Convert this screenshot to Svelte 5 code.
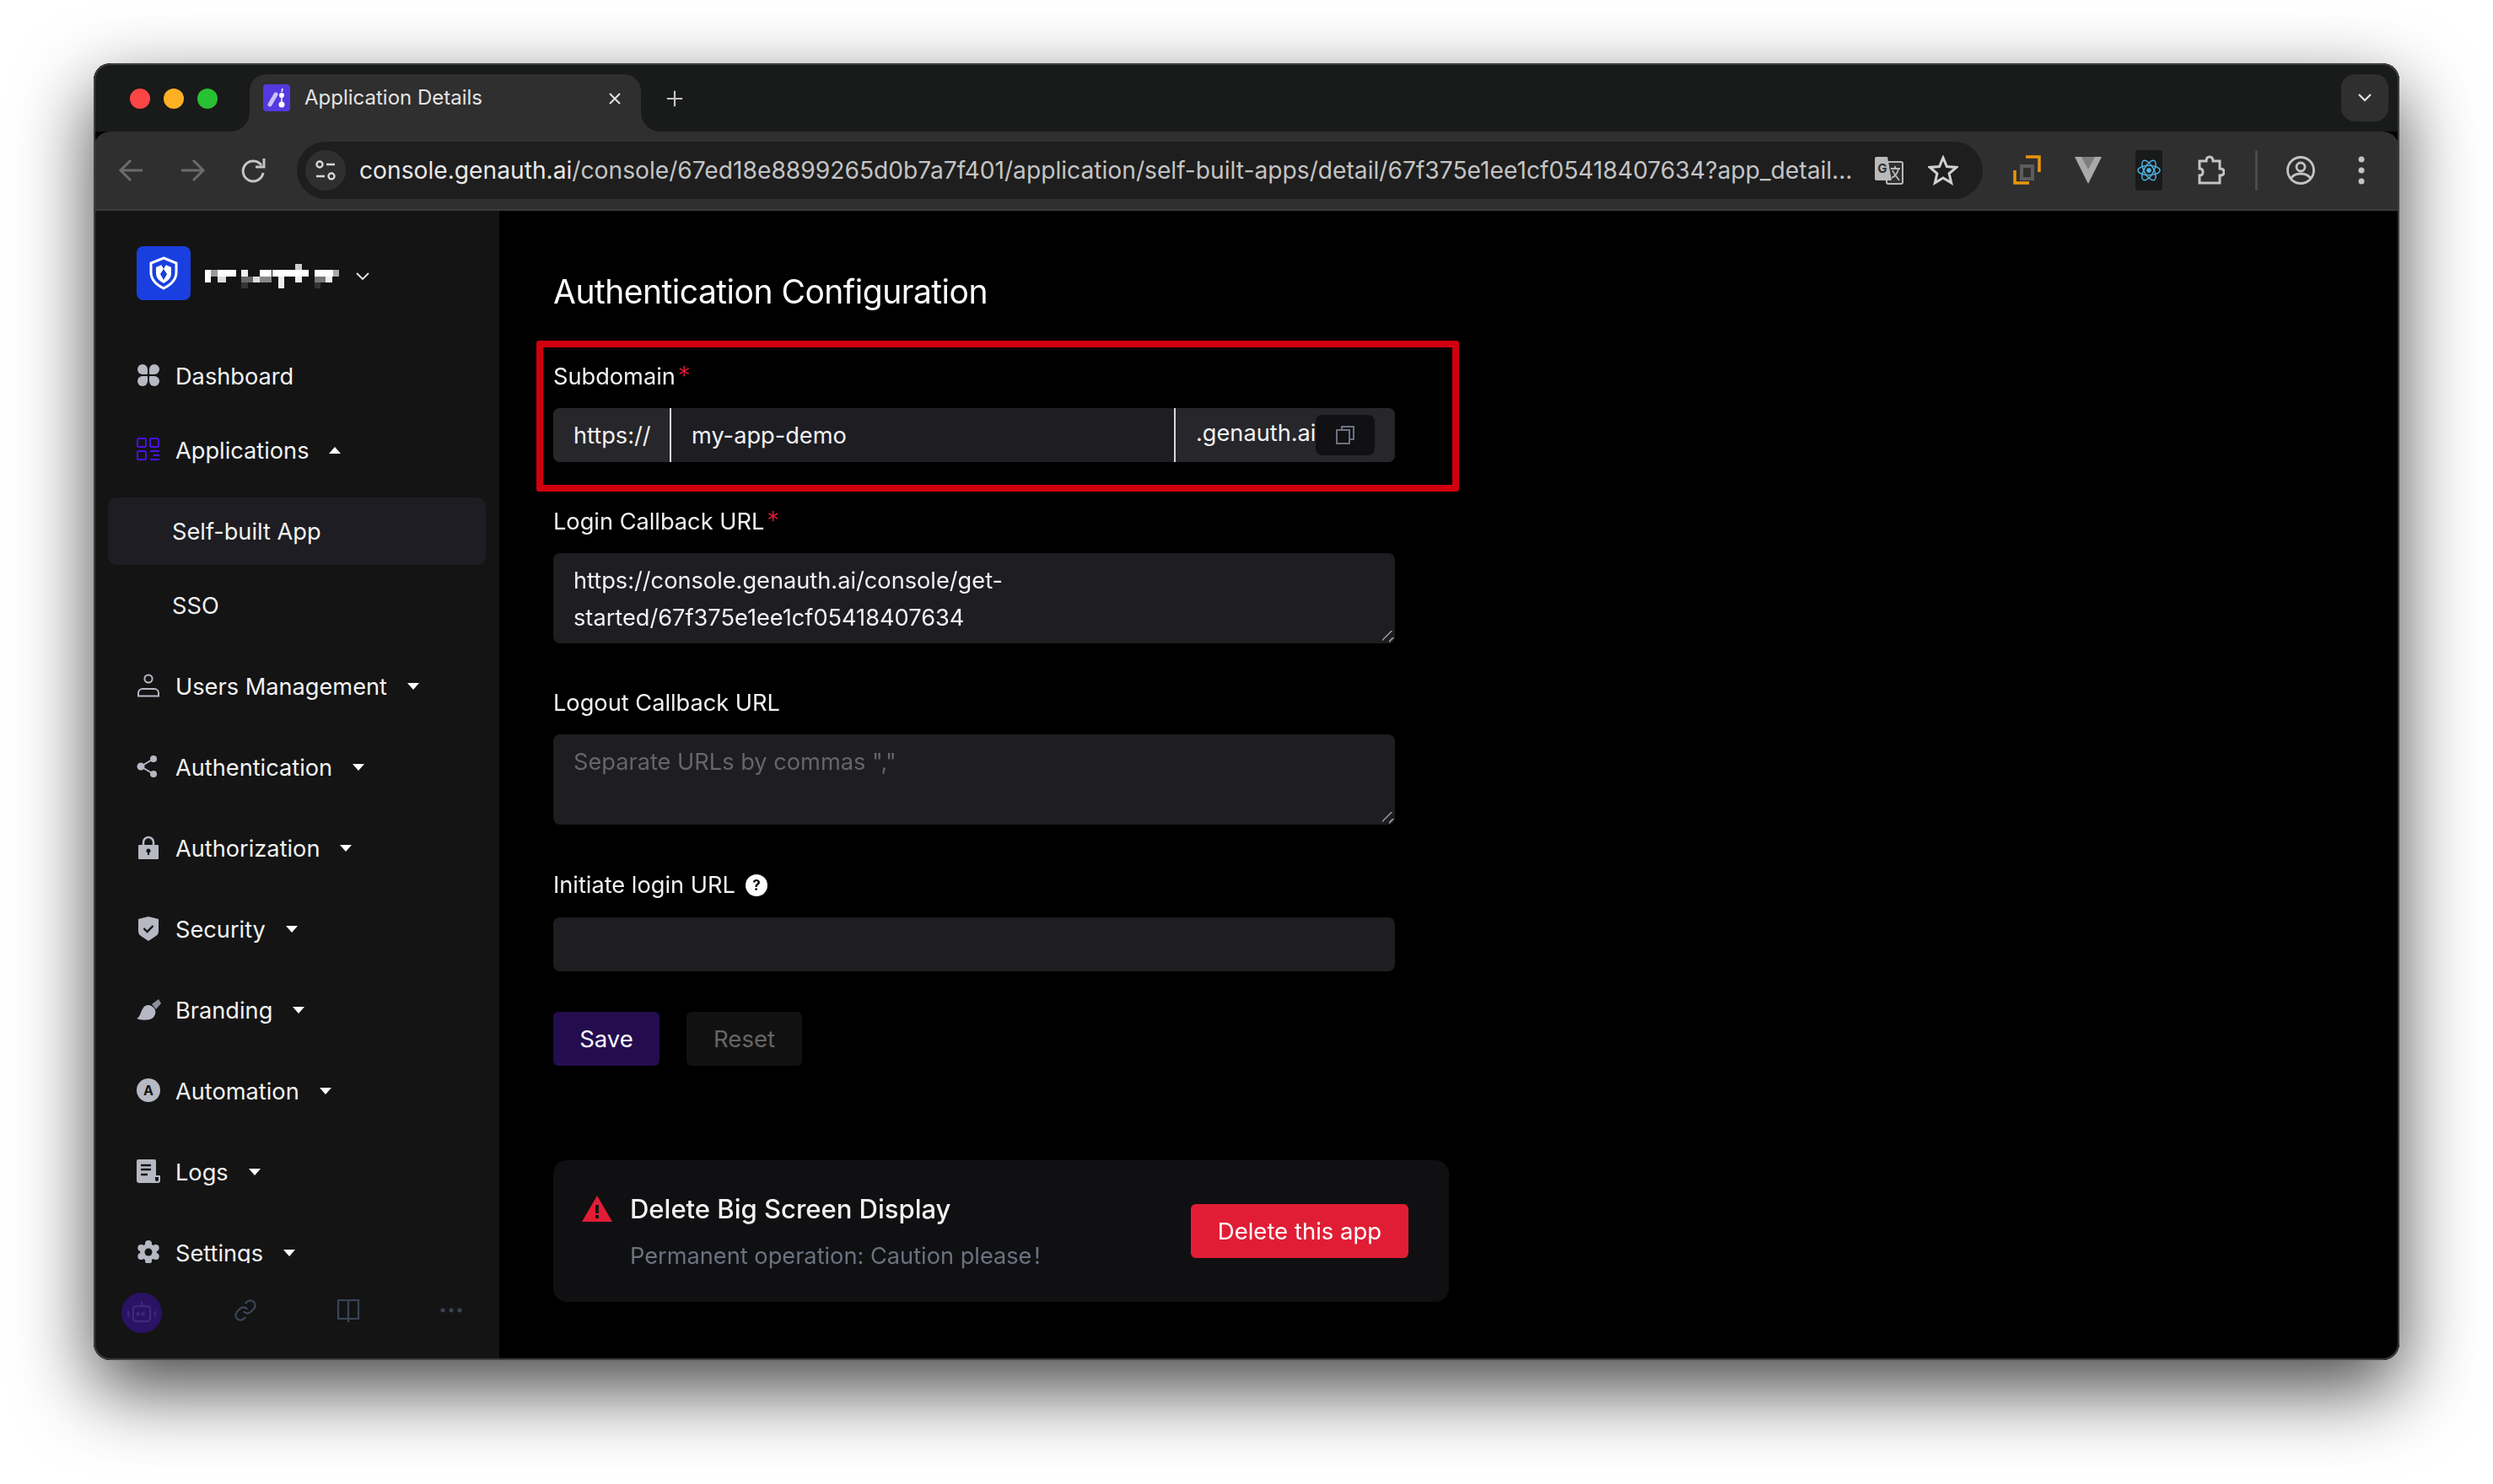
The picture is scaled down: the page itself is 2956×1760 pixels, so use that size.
<script>
  // sidebar menu; `caret` is the arrow direction, `gap` the space under the row
  const menu = [
    { icon: 'dashboard', label: 'Dashboard', gap: 8 },
    { icon: 'apps', label: 'Applications', caret: 'up' },
    { label: 'Self-built App', sub: true, active: true, gap: 8 },
    { label: 'SSO', sub: true },
    { icon: 'user', label: 'Users Management', caret: 'down' },
    { icon: 'share', label: 'Authentication', caret: 'down' },
    { icon: 'lock', label: 'Authorization', caret: 'down' },
    { icon: 'shield', label: 'Security', caret: 'down' },
    { icon: 'brush', label: 'Branding', caret: 'down' },
    { icon: 'auto', label: 'Automation', caret: 'down' },
    { icon: 'logs', label: 'Logs', caret: 'down' },
    { icon: 'gear', label: 'Settings', caret: 'down' }
  ];

  // mosaic that hides the tenant name
  const mosaic = [
    [692, 162, 24, 22, '#ccc'],
    [370, 184, 22, 44, '#fff'], [392, 184, 24, 22, '#999'], [416, 184, 64, 22, '#fff'], [416, 206, 28, 22, '#ddd'],
    [500, 184, 24, 22, '#eee'], [500, 206, 40, 22, '#666'], [540, 206, 26, 22, '#ddd'], [566, 184, 42, 22, '#fff'],
    [566, 206, 42, 22, '#888'], [500, 228, 22, 22, '#333'], [610, 184, 128, 22, '#fff'], [632, 206, 20, 44, '#eee'],
    [692, 206, 24, 22, '#eee'], [760, 184, 66, 22, '#fff'], [826, 184, 20, 22, '#aaa'], [760, 206, 40, 22, '#777'],
    [800, 206, 22, 22, '#eee'], [760, 228, 20, 22, '#333']
  ];

  const url = 'console.genauth.ai';
  const urlRest = '/console/67ed18e8899265d0b7a7f401/application/self-built-apps/detail/67f375e1ee1cf05418407634?app_detail...';
</script>

{#snippet navIcon(name)}
  <svg class="nav-icon" viewBox="0 0 28 28">
    {#if name === 'dashboard'}
      <g fill="#b6b8c3">
        <rect x="1" y="1" width="12" height="12" rx="6" /><rect x="7" y="7" width="6" height="6" rx="1" />
        <rect x="15" y="1" width="12" height="12" rx="6" /><rect x="15" y="7" width="6" height="6" rx="1" />
        <rect x="1" y="15" width="12" height="12" rx="6" /><rect x="7" y="15" width="6" height="6" rx="1" />
        <rect x="15" y="15" width="12" height="12" rx="6" /><rect x="15" y="15" width="6" height="6" rx="1" />
      </g>
    {:else if name === 'apps'}
      <g fill="none" stroke="#4a12e8" stroke-width="2">
        <rect x="1" y="1" width="10" height="10" rx="1.5" /><rect x="16" y="1" width="10" height="10" rx="1.5" />
        <rect x="1" y="16" width="10" height="10" rx="1.5" />
        <path d="M16 16h11M20 21h7M16 26h11" />
      </g>
    {:else if name === 'user'}
      <g fill="none" stroke="#b6b8c3" stroke-width="2">
        <circle cx="14" cy="6" r="4.600" />
        <path d="M2 26.500v-3.500a5 5 0 0 1 5-5h14a5 5 0 0 1 5 5v3.500z" />
      </g>
    {:else if name === 'share'}
      <g fill="#b6b8c3">
        <circle cx="20" cy="5" r="4" /><circle cx="5" cy="14" r="4.500" /><circle cx="20" cy="23" r="4" />
        <path d="M20 5L5 14l15 9" fill="none" stroke="#b6b8c3" stroke-width="2" />
      </g>
    {:else if name === 'lock'}
      <path d="M8 12V8a6 6 0 0 1 12 0v4" fill="none" stroke="#b6b8c3" stroke-width="2.500" />
      <rect x="2" y="11" width="24" height="17" rx="1" fill="#b6b8c3" />
      <circle cx="14" cy="18" r="2.500" fill="#141414" /><rect x="13" y="18" width="2" height="5" fill="#141414" />
    {:else if name === 'shield'}
      <path d="M14 0l12 3v15q0 3-3 5l-9 6-9-6q-3-2-3-5V3z" fill="#b6b8c3" />
      <path d="M8.500 14l4 4 7-7" fill="none" stroke="#141414" stroke-width="2.400" />
    {:else if name === 'brush'}
      <path d="M0 25C4 24 5 16 8 12C11 8 17 8 21 13C24 17 22 24 16 26C10 27 5 27 0 25z" fill="#b6b8c3" />
      <path d="M18 8L26 2L29 7L23 14z" fill="#8d8f9a" />
    {:else if name === 'auto'}
      <circle cx="14" cy="14" r="14" fill="#b6b8c3" />
      <text x="14" y="20" text-anchor="middle" class="glyph" font-size="16" fill="#141414">A</text>
    {:else if name === 'logs'}
      <path d="M3 0h18a2 2 0 0 1 2 2v17h5v6a3 3 0 0 1-3 3H3a3 3 0 0 1-3-3V2a2 2 0 0 1 2-2z" fill="#b6b8c3" />
      <path d="M5 7h12M5 12h12M5 18h8" stroke="#141414" stroke-width="2.400" />
      <path d="M22 21v3a2 2 0 0 0 4 0v-3z" fill="#141414" />
    {:else if name === 'gear'}
      <g fill="#b6b8c3">
        <circle cx="14" cy="14" r="10" />
        <circle cx="14" cy="4" r="4" /><circle cx="14" cy="24" r="4" />
        <circle cx="5.300" cy="9" r="4" /><circle cx="22.700" cy="9" r="4" />
        <circle cx="5.300" cy="19" r="4" /><circle cx="22.700" cy="19" r="4" />
      </g>
      <circle cx="14" cy="14" r="4.500" fill="#141414" />
    {/if}
  </svg>
{/snippet}

<div class="window">
  <div class="tabstrip">
    <div class="lights">
      <span class="light red"></span><span class="light amber"></span><span class="light green"></span>
    </div>
    <div class="tab">
      <svg class="favicon" viewBox="0 0 32 32">
        <rect width="32" height="32" rx="4" fill="#5538e0" />
        <path d="M8 24L15 12" stroke="#c9c2f2" stroke-width="5" stroke-linecap="round" />
        <circle cx="22" cy="13" r="3" fill="#fff" /><circle cx="22" cy="24" r="3.500" fill="#fff" />
        <path d="M22 15v6M22 9l1-4" stroke="#fff" stroke-width="1.500" />
      </svg>
      <span class="tab-title">Application Details</span>
      <svg class="tab-close" viewBox="0 0 16 16"><path d="M2 2l12 12M14 2L2 14" stroke="#e3e3e3" stroke-width="2" /></svg>
    </div>
    <svg class="new-tab" viewBox="0 0 24 24"><path d="M12 2v20M2 12h20" stroke="#c4c4c4" stroke-width="2.400" /></svg>
    <div class="tab-menu">
      <svg viewBox="0 0 16 10" width="16" height="10"><path d="M1 1l7 7 7-7" fill="none" stroke="#e3e3e3" stroke-width="2.200" /></svg>
    </div>
  </div>

  <div class="toolbar">
    <svg class="tool" viewBox="0 0 36 36"><path d="M31 18H6M17 6L5 18l12 12" fill="none" stroke="#6b6b6b" stroke-width="3" /></svg>
    <svg class="tool" viewBox="0 0 36 36"><path d="M5 18h25M19 6l12 12-12 12" fill="none" stroke="#6b6b6b" stroke-width="3" /></svg>
    <svg class="tool" viewBox="0 0 36 36">
      <path d="M28 12a12 12 0 1 0 2 9" fill="none" stroke="#c4c4c4" stroke-width="3" />
      <path d="M31 4v10H21" fill="none" stroke="#c4c4c4" stroke-width="3" />
    </svg>

    <div class="omnibox">
      <div class="site-info">
        <svg viewBox="0 0 26 26" width="26" height="26">
          <circle cx="6" cy="6" r="3.500" fill="none" stroke="#d8d8d8" stroke-width="2.400" />
          <path d="M14 6h10M2 20h10" stroke="#d8d8d8" stroke-width="2.400" />
          <circle cx="20" cy="20" r="3.500" fill="none" stroke="#d8d8d8" stroke-width="2.400" />
        </svg>
      </div>
      <div class="url"><span class="host">{url}</span>{urlRest}</div>
      <svg class="omni-icon" viewBox="0 0 36 36">
        <rect x="15" y="8" width="19" height="26" rx="2" fill="#2f2f2f" stroke="#b9b9b9" stroke-width="2" />
        <path d="M3 2h13l5 28H3a2 2 0 0 1-2-2V4a2 2 0 0 1 2-2z" fill="#b9b9b9" />
        <text x="10" y="21" text-anchor="middle" class="glyph" font-size="15" fill="#2f2f2f">G</text>
        <path d="M20 16h11M25 13v3M29 16c-1 6-4 9-8 11M22 18c1 3 5 8 8 12" fill="none" stroke="#b9b9b9" stroke-width="1.800" />
      </svg>
      <svg class="omni-icon star" viewBox="0 0 36 36">
        <path d="M18 3l4.400 10.500 11.300.9-8.600 7.400 2.600 11.100L18 27l-9.700 5.900 2.600-11.100-8.600-7.400 11.300-.9z" fill="none" stroke="#d0d0d0" stroke-width="3" />
      </svg>
    </div>

    <svg class="tool ext-first" viewBox="0 0 36 36">
      <path d="M16 4h16v18" fill="none" stroke="#e8960c" stroke-width="3.500" transform="translate(0 -2)" />
      <path d="M3 18v15h17" fill="none" stroke="#e8960c" stroke-width="3.500" />
      <rect x="9" y="11" width="17" height="19" fill="#5c5c5c" /><rect x="13" y="15" width="9" height="11" fill="#2f2f2f" />
    </svg>
    <svg class="tool" viewBox="0 0 36 36">
      <path d="M2 2h32L18 34z" fill="#a9a9a9" /><path d="M10 2h16l-8 15z" fill="#7e7e7e" />
    </svg>
    <div class="react-ext">
      <svg viewBox="0 0 32 32" width="30" height="30">
        <g fill="none" stroke="#4fb8e8" stroke-width="1.500">
          <ellipse cx="16" cy="16" rx="14" ry="6" /><ellipse cx="16" cy="16" rx="14" ry="6" transform="rotate(60 16 16)" />
          <ellipse cx="16" cy="16" rx="14" ry="6" transform="rotate(120 16 16)" />
        </g>
        <circle cx="16" cy="16" r="3" fill="#4fb8e8" />
      </svg>
    </div>
    <svg class="tool" viewBox="0 0 36 36">
      <path d="M6 7h8q0-5 4-5t4 5h8v9q5 0 5 4t-5 4v9H6v-9q4 0 4-4t-4-4z" fill="none" stroke="#c4c4c4" stroke-width="3" />
    </svg>
    <span class="tool-sep"></span>
    <svg class="tool" viewBox="0 0 36 36">
      <circle cx="18" cy="18" r="15.500" fill="none" stroke="#c4c4c4" stroke-width="2.800" />
      <circle cx="18" cy="14" r="5" fill="none" stroke="#c4c4c4" stroke-width="2.800" />
      <path d="M6 28c3-5 7-6 12-6s9 1 12 6" fill="none" stroke="#c4c4c4" stroke-width="2.800" />
    </svg>
    <svg class="tool" viewBox="0 0 36 36" fill="#c4c4c4"><circle cx="18" cy="5" r="3.500" /><circle cx="18" cy="18" r="3.500" /><circle cx="18" cy="31" r="3.500" /></svg>
  </div>

  <div class="body">
    <aside class="sidebar">
      <div class="side-scroll">
        <div class="brand">
          <div class="brand-logo">
            <svg viewBox="0 0 36 40" width="36" height="40">
              <path d="M18 2l15 6v11c0 9-7 15-15 19C10 34 3 28 3 19V8z" fill="none" stroke="#fff" stroke-width="3" />
              <path d="M18 9l9 4v7c0 6-4 9-9 12-5-3-9-6-9-12v-7z" fill="#fff" />
              <path d="M14 8l4 7 4-7zM18 15l-4 6 4 7 4-7z" fill="#1a3fe0" />
            </svg>
          </div>
          <svg class="mosaic" viewBox="370 162 480 88" shape-rendering="crispEdges">
            {#each mosaic as [x, y, w, h, c]}
              <rect {x} {y} width={w} height={h} fill={c} />
            {/each}
          </svg>
          <svg class="brand-chevron" viewBox="0 0 16 10"><path d="M1 1l7 7 7-7" fill="none" stroke="#e8e8e8" stroke-width="1.800" /></svg>
        </div>

        <nav class="menu">
          {#each menu as item}
            <div class="item" class:sub={item.sub} class:active={item.active} style:margin-bottom={item.gap ? `${item.gap}px` : null}>
              {#if item.icon}{@render navIcon(item.icon)}{/if}
              <span>{item.label}</span>
              {#if item.caret}
                <svg class="caret" class:up={item.caret === 'up'} viewBox="0 0 14 8"><path d="M0 0h14L7 8z" fill="#fff" /></svg>
              {/if}
            </div>
          {/each}
        </nav>
      </div>

      <div class="side-foot">
        <div class="robot">
          <svg viewBox="0 0 32 32" width="36" height="36" fill="none" stroke="#3d2a7a" stroke-width="2">
            <rect x="7" y="9" width="18" height="16" rx="3" />
            <path d="M16 9V4M2 14v6M30 14v6M19 15l-3 2 3 2" />
            <circle cx="12" cy="17" r="1" fill="#3d2a7a" />
          </svg>
        </div>
        <svg class="foot-icon foot-link" viewBox="0 0 24 24" fill="none" stroke="#3a4556" stroke-width="2">
          <path d="M10 13a5 5 0 0 0 7.540.540l3-3a5 5 0 0 0-7.070-7.070l-1.720 1.710" />
          <path d="M14 11a5 5 0 0 0-7.540-.540l-3 3a5 5 0 0 0 7.070 7.070l1.710-1.710" />
        </svg>
        <svg class="foot-icon" viewBox="0 0 28 28" fill="none" stroke="#3a4556" stroke-width="2.200">
          <path d="M2 2h24v22H2zM14 2v26" />
        </svg>
        <svg class="foot-icon" viewBox="0 0 28 28" fill="#3a4556"><circle cx="4" cy="14" r="2.500" /><circle cx="14" cy="14" r="2.500" /><circle cx="24" cy="14" r="2.500" /></svg>
      </div>
    </aside>

    <main class="content">
      <div class="annotation"></div>
      <h1>Authentication Configuration</h1>

      <div class="field">
        <label for="subdomain">Subdomain<i>*</i></label>
        <div class="input-group">
          <span class="prefix">https://</span>
          <input id="subdomain" value="my-app-demo" />
          <div class="suffix">
            <span>.genauth.ai</span>
            <button class="copy" aria-label="Copy">
              <svg viewBox="0 0 24 24" width="24" height="24" fill="none" stroke="#6b7280" stroke-width="2">
                <path d="M8 5V2h14v15h-4" /><rect x="2" y="6" width="15" height="16" />
              </svg>
            </button>
          </div>
        </div>
      </div>

      <div class="field">
        <label for="login-cb">Login Callback URL<i>*</i></label>
        <textarea id="login-cb">https://console.genauth.ai/console/get-started/67f375e1ee1cf05418407634</textarea>
      </div>

      <div class="field">
        <label for="logout-cb">Logout Callback URL</label>
        <textarea id="logout-cb" placeholder={'Separate URLs by commas ","'}></textarea>
      </div>

      <div class="field">
        <label for="init-url" class="with-help">
          Initiate login URL
          <svg viewBox="0 0 26 26" width="26" height="26">
            <circle cx="13" cy="13" r="13" fill="#fff" />
            <text x="13" y="19" text-anchor="middle" class="glyph" font-size="17" fill="#000">?</text>
          </svg>
        </label>
        <input id="init-url" class="plain" />
      </div>

      <div class="actions">
        <button class="btn save">Save</button>
        <button class="btn reset">Reset</button>
      </div>

      <section class="danger">
        <div class="danger-text">
          <div class="danger-title">
            <svg viewBox="0 0 36 32" width="36" height="32">
              <path d="M18 0l18 31H0z" fill="#e11d35" />
              <rect x="16" y="11" width="4" height="10" fill="#141414" /><rect x="16" y="23" width="4" height="4" fill="#141414" />
            </svg>
            <h2>Delete Big Screen Display</h2>
          </div>
          <p>Permanent operation: Caution please&#8202;!</p>
        </div>
        <button class="btn delete">Delete this app</button>
      </section>
    </main>
  </div>
</div>

<style>
  :global(body) {
    margin: 0;
    background: #fff;
    font-family: Inter, "Noto Sans", sans-serif;
  }
  :global(#app) {
    filter: drop-shadow(0 34px 45px rgba(0, 0, 0, 0.72));
    width: 2956px;
    height: 1760px;
    overflow: hidden;
  }

  .window {
    position: relative;
    display: flex;
    flex-direction: column;
    width: 2734px;
    height: 1538px;
    margin: 75px 0 0 111px;
    border-radius: 20px;
    overflow: hidden;
    background: #000;
  }
  .window::after {
    content: "";
    position: absolute;
    inset: 0;
    border-radius: 20px;
    box-shadow: inset 0 0 0 2px #3e3e3e;
    pointer-events: none;
  }

  /* tab strip */
  .tabstrip {
    display: flex;
    align-items: flex-start;
    flex: 0 0 81px;
    background: #191a1a;
  }
  .lights {
    display: flex;
    gap: 16px;
    margin: 30px 0 0 43px;
  }
  .light {
    width: 24px;
    height: 24px;
    border-radius: 50%;
  }
  .red { background: #fe4545; }
  .amber { background: #feb024; }
  .green { background: #28c131; }
  .tab {
    position: relative;
    display: flex;
    align-items: flex-start;
    box-sizing: border-box;
    width: 464px;
    height: 68px;
    margin: 13px 0 0 38px;
    padding: 12px 0 0 16px;
    background: #2f2f2f;
    border-radius: 20px 20px 0 0;
  }
  .tab::before,
  .tab::after {
    content: "";
    position: absolute;
    bottom: 0;
    width: 22px;
    height: 22px;
  }
  .tab::before {
    left: -22px;
    background: radial-gradient(circle at 0 0, transparent 21.500px, #2f2f2f 22px);
  }
  .tab::after {
    right: -22px;
    background: radial-gradient(circle at 100% 0, transparent 21.500px, #2f2f2f 22px);
  }
  .favicon {
    width: 32px;
    height: 32px;
    flex: none;
  }
  .tab-title {
    margin-left: 17px;
    font-size: 24px;
    line-height: 32px;
    color: #e3e3e3;
  }
  .tab-close {
    position: absolute;
    top: 21px;
    left: 425px;
    width: 16px;
    height: 16px;
  }
  .new-tab {
    width: 22px;
    height: 22px;
    margin: 31px 0 0 29px;
  }
  .tab-menu {
    display: flex;
    align-items: center;
    justify-content: center;
    width: 56px;
    height: 56px;
    margin: 13px 13px 0 auto;
    border-radius: 16px;
    background: #2f2f2f;
  }

  /* toolbar */
  .toolbar {
    display: flex;
    align-items: center;
    flex: 0 0 94px;
    box-sizing: border-box;
    padding: 0 0 0 27px;
    background: #2f2f2f;
    border-radius: 20px 20px 0 0;
    border-bottom: 2px solid #3a3a3a;
    gap: 36px;
  }
  .tool {
    width: 36px;
    height: 36px;
    flex: none;
  }
  .omnibox {
    display: flex;
    align-items: center;
    flex: 0 0 1999px;
    min-width: 0;
    box-sizing: border-box;
    height: 68px;
    margin: 0 -1px 0 -2px;
    padding-left: 10px;
    border-radius: 34px;
    background: #1e1e1e;
  }
  .site-info {
    display: flex;
    align-items: center;
    justify-content: center;
    width: 48px;
    height: 48px;
    flex: none;
    border-radius: 50%;
    background: #2f2f2f;
  }
  .url {
    flex: 1;
    min-width: 0;
    margin-left: 16px;
    font-size: 28.200px;
    white-space: nowrap;
    overflow: hidden;
    color: #c4c4c4;
  }
  .host { color: #e8e8e8; }
  .omni-icon {
    width: 36px;
    height: 36px;
    flex: none;
    margin-left: 16px;
  }
  .omni-icon.star { margin: 0 29px 0 28px; }
  .react-ext {
    display: flex;
    align-items: center;
    justify-content: center;
    width: 32px;
    height: 48px;
    margin: 0 2px;
    flex: none;
    background: #191a1a;
    border-radius: 3px;
  }
  .tool-sep {
    width: 3px;
    height: 48px;
    flex: none;
    margin-right: -3px;
    background: #4c4c4c;
    border-radius: 2px;
  }

  .body {
    display: flex;
    flex: 1;
    min-height: 0;
  }

  /* sidebar */
  .sidebar {
    display: flex;
    flex-direction: column;
    flex: 0 0 481px;
    box-sizing: border-box;
    background: #141414;
  }
  .side-scroll {
    flex: 1;
    min-height: 0;
    overflow: hidden;
    padding: 42px 16px 0 17px;
  }
  .brand {
    display: flex;
    align-items: center;
    height: 64px;
    margin: 0 0 50px 34px;
  }
  .brand-logo {
    display: flex;
    align-items: center;
    justify-content: center;
    width: 64px;
    height: 64px;
    border-radius: 8px;
    background: #1a3fe0;
  }
  .mosaic {
    width: 160px;
    height: 29.300px;
    margin: 8px 0 0 17px;
  }
  .brand-chevron {
    width: 16px;
    height: 10px;
    margin: 8px 0 0 19px;
  }
  .menu {
    display: flex;
    flex-direction: column;
  }
  .item {
    display: flex;
    align-items: center;
    flex: none;
    height: 80px;
    margin-bottom: 16px;
    padding-left: 34px;
    border-radius: 10px;
    font-size: 27.200px;
    color: #f2f2f2;
  }
  .item.sub { padding-left: 76px; }
  .item.active { background: #1d1d23; }
  .nav-icon {
    width: 28px;
    height: 28px;
    flex: none;
    margin: -3px 18px 0 0;
    overflow: visible;
  }
  .glyph {
    font-family: Inter, sans-serif;
    font-weight: 700;
  }
  .caret {
    width: 14px;
    height: 8px;
    margin-left: 24px;
  }
  .caret.up { transform: rotate(180deg); }
  .side-foot {
    display: flex;
    align-items: flex-start;
    flex: 0 0 115px;
    box-sizing: border-box;
    padding: 35px 0 0 33px;
    gap: 94px;
  }
  .robot {
    display: flex;
    align-items: center;
    justify-content: center;
    width: 48px;
    height: 48px;
    border-radius: 50%;
    background: #2a1264;
  }
  .foot-icon {
    width: 28px;
    height: 28px;
    margin-top: 7px;
  }
  .foot-link { margin-left: -9px; }

  /* form */
  .content {
    position: relative;
    flex: 1;
    box-sizing: border-box;
    padding: 68px 0 0 64px;
    background: #000;
    color: #f2f2f2;
  }
  .annotation {
    position: absolute;
    left: 44px;
    top: 154px;
    width: 1094px;
    height: 179px;
    box-sizing: border-box;
    border: 8px solid #d0000f;
    border-radius: 3px;
  }
  h1 {
    margin: 0 0 54px;
    font-size: 39px;
    font-weight: 400;
    letter-spacing: -0.5px;
    line-height: 56px;
    color: #fff;
  }
  .field {
    width: 998px;
    margin-bottom: 52px;
  }
  label {
    display: block;
    height: 38px;
    margin-bottom: 18px;
    font-size: 27.200px;
    line-height: 38px;
  }
  label i {
    margin-left: 3px;
    font-style: normal;
    font-size: 30px;
    font-weight: 300;
    line-height: 0;
    color: #e11d35;
  }
  label.with-help {
    display: flex;
    align-items: center;
    gap: 12px;
    height: 40px;
  }
  input,
  textarea {
    display: block;
    box-sizing: border-box;
    font: inherit;
    font-size: 27.200px;
    color: #f2f2f2;
    background: #1d1d22;
    border: 0;
    outline: 0;
  }
  input.plain {
    width: 100%;
    height: 64px;
    padding: 0 24px;
    border-radius: 8px;
  }
  textarea {
    width: 100%;
    height: 107px;
    padding: 11px 24px 0;
    line-height: 44px;
    border-radius: 8px;
  }
  textarea::placeholder {
    color: #666;
  }
  /* the grip is far fainter than the reference by default */
  textarea::-webkit-resizer {
    background:
      linear-gradient(135deg, transparent 33%, #8c8c8c 34%, #8c8c8c 42%, transparent 43%) 0 0 / 100% 100% no-repeat,
      linear-gradient(135deg, transparent 25%, #8c8c8c 27%, #8c8c8c 42%, transparent 44%) 100% 100% / 50% 50% no-repeat;
  }
  .input-group {
    display: flex;
    align-items: stretch;
    height: 64px;
    border-radius: 8px;
    overflow: hidden;
    background: #1d1d22;
    font-size: 27.200px;
  }
  .prefix {
    display: flex;
    align-items: center;
    flex: 0 0 140px;
    box-sizing: border-box;
    padding-left: 24px;
    background: #26262b;
    border-right: 2px solid #d8d8d8;
  }
  .input-group input {
    flex: 1;
    min-width: 0;
    padding: 0 24px;
  }
  .suffix {
    display: flex;
    align-items: center;
    flex: 0 0 262px;
    min-width: 0;
    box-sizing: border-box;
    padding: 0 24px 0 24px;
    background: #26262b;
    border-left: 2px solid #d8d8d8;
  }
  .suffix span {
    flex: 1;
    min-width: 0;
    overflow: hidden;
    margin-top: -6px;
    white-space: nowrap;
  }
  .copy {
    display: flex;
    align-items: center;
    justify-content: center;
    width: 70px;
    height: 48px;
    flex: none;
    border: 0;
    padding: 0;
    border-radius: 8px;
    background: #111113;
  }
  .actions {
    display: flex;
    gap: 32px;
    margin: -4px 0 112px;
  }
  .btn {
    height: 64px;
    border: 0;
    border-radius: 6px;
    font: inherit;
    font-size: 27.500px;
    color: #fff;
  }
  .save {
    width: 126px;
    background: #240d4f;
  }
  .reset {
    width: 137px;
    background: #111;
    color: #666;
  }
  .danger {
    display: flex;
    align-items: center;
    justify-content: space-between;
    width: 1062px;
    height: 168px;
    box-sizing: border-box;
    padding: 0 48px 0 34px;
    border-radius: 16px;
    background: #101012;
  }
  .danger-text { margin-top: 2px; }
  .danger-title {
    display: flex;
    align-items: center;
    gap: 21px;
    height: 44px;
  }
  h2 {
    margin: 0;
    font-size: 31px;
    font-weight: 500;
    line-height: 44px;
  }
  .danger p {
    margin: 14px 0 0 57px;
    font-size: 27.200px;
    line-height: 40px;
    color: #6b7280;
  }
  .delete {
    width: 258px;
    background: #e11d35;
  }
</style>
